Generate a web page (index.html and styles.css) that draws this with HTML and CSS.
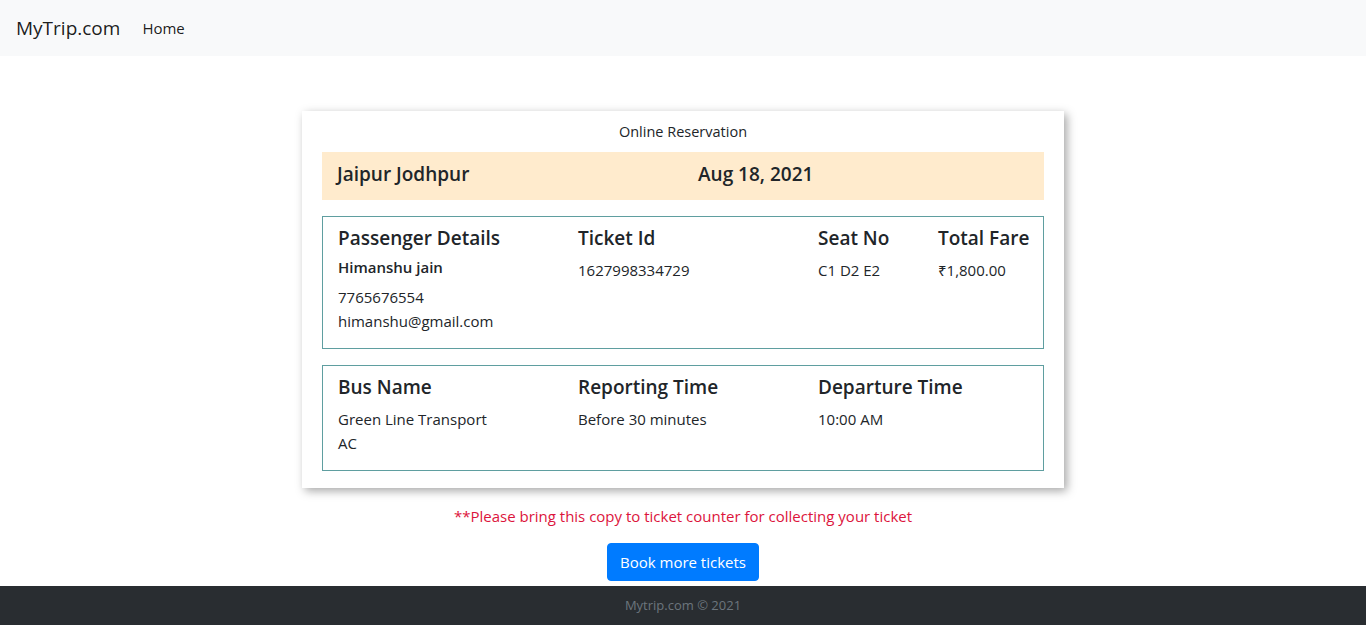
FILE: index.html
```html
<!DOCTYPE html>
<html lang="en">
<head>
<meta charset="utf-8">
<title>MyTrip.com</title>
<link rel="stylesheet" href="styles.css">
</head>
<body>
<nav class="navbar">
  <a class="brand" href="#">MyTrip.com</a>
  <a class="nav-link" href="#">Home</a>
</nav>
<main class="main">
  <div class="ticket">
    <div class="ticket-title">Online Reservation</div>
    <div class="route">
      <div class="half"><h5>Jaipur Jodhpur</h5></div>
      <div class="half"><h5>Aug 18, 2021</h5></div>
    </div>
    <div class="box">
      <div class="col col-4">
        <h5 class="head">Passenger Details</h5>
        <h6 class="name">Himanshu jain</h6>
        <p>7765676554</p>
        <p>himanshu@gmail.com</p>
      </div>
      <div class="col col-4">
        <h5 class="head">Ticket Id</h5>
        <p>1627998334729</p>
      </div>
      <div class="col col-2">
        <h5 class="head">Seat No</h5>
        <p>C1 D2 E2</p>
      </div>
      <div class="col col-2">
        <h5 class="head">Total Fare</h5>
        <p>₹1,800.00</p>
      </div>
    </div>
    <div class="box box-2">
      <div class="col col-4">
        <h5 class="head">Bus Name</h5>
        <p>Green Line Transport</p>
        <p>AC</p>
      </div>
      <div class="col col-4">
        <h5 class="head">Reporting Time</h5>
        <p>Before 30 minutes</p>
      </div>
      <div class="col col-4">
        <h5 class="head">Departure Time</h5>
        <p>10:00 AM</p>
      </div>
    </div>
  </div>
  <p class="notice">**Please bring this copy to ticket counter for collecting your ticket</p>
  <a class="btn" href="#">Book more tickets</a>
</main>
<footer class="footer">Mytrip.com © 2021</footer>
</body>
</html>
```
FILE: styles.css
```css
* { box-sizing: border-box; }
html, body { margin: 0; padding: 0; }
body {
  font-family: "Open Sans", "Noto Sans", sans-serif;
  font-size: 15px;
  line-height: 24px;
  color: #212529;
  background: #fff;
}
a { text-decoration: none; }
.navbar {
  display: flex;
  align-items: center;
  height: 56px;
  padding: 0 16px;
  background: #f8f9fa;
}
.brand {
  font-size: 19px;
  color: rgba(0,0,0,.9);
  margin-right: 14px;
  line-height: 30px;
}
.nav-link {
  padding: 0 8px;
  color: rgba(0,0,0,.9);
  font-size: 15px;
}
.main {
  display: flex;
  flex-direction: column;
  align-items: center;
  padding-top: 55px;
}
.ticket {
  width: 762px;
  padding: 9px 20px 17px;
  background: #fff;
  box-shadow: 3px 3px 9px rgba(0,0,0,.35);
}
.ticket-title {
  text-align: center;
  font-size: 14.5px;
  line-height: 24px;
  margin-bottom: 8px;
}
.route {
  display: flex;
  height: 48px;
  padding-bottom: 5px;
  align-items: center;
  background: #ffebcd;
}
.half { width: 50%; padding: 0 15px; }
h5 {
  margin: 0;
  font-size: 19px;
  line-height: 24px;
  font-weight: 600;
  white-space: nowrap;
}
.box {
  display: flex;
  margin-top: 16px;
  border: 1px solid #5f9ea0;
  padding: 9px 0 15px;
}
.col { padding: 0 15px; }
.col-4 { width: 240px; }
.col-2 { width: 120px; }
.head { font-weight: 600; margin-bottom: 8px; }
.name {
  margin: 0 0 8px;
  font-size: 15px;
  line-height: 19px;
  font-weight: 600;
}
p { margin: 0; }
.notice {
  margin: 16px 0 15px;
  color: #dc143c;
  font-size: 15px;
}
.btn {
  display: inline-block;
  height: 38px;
  line-height: 36px;
  padding: 0 12px;
  font-size: 15px;
  color: #fff;
  background: #007bff;
  border: 1px solid #007bff;
  border-radius: 4px;
  margin-bottom: 5px;
}
.footer {
  height: 39px;
  line-height: 39px;
  text-align: center;
  background: #292d31;
  color: #6c757d;
  font-size: 13px;
}
```
